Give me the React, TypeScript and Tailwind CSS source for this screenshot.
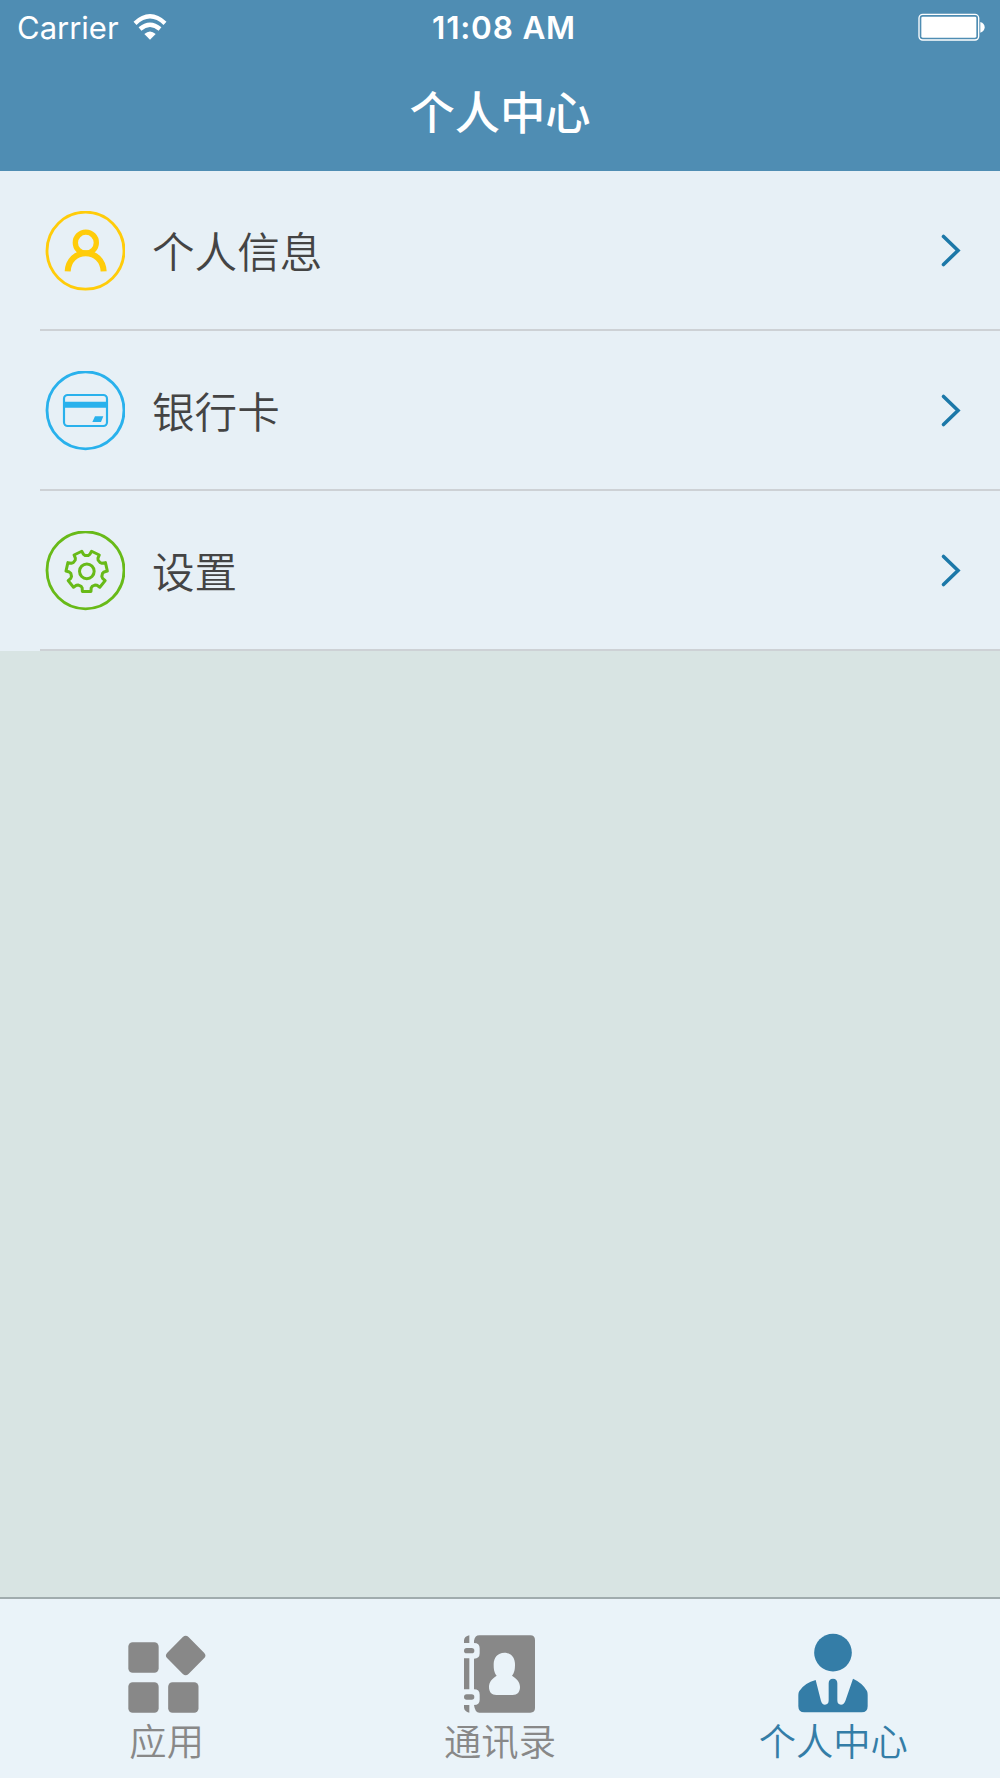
import type { ReactNode } from 'react';
import { clsx } from 'clsx';

interface MenuItem {
  label: string;
  icon: ReactNode;
}

interface TabItem extends MenuItem {
  active?: boolean;
}

// Closed outline of a cog with seven teeth, one of them pointing straight down
function cogPath(cx: number, cy: number) {
  const steps: [number, number][] = [[-12, 62], [12, 62], [15, 52], [20, 48], [31.4, 48], [36.4, 52]];
  const points: string[] = [];
  for (let tooth = 0; tooth < 7; tooth++) {
    for (const [offset, r] of steps) {
      const a = ((90 + (tooth * 360) / 7 + offset) * Math.PI) / 180;
      points.push(`${(cx + r * Math.cos(a)).toFixed(1)} ${(cy + r * Math.sin(a)).toFixed(1)}`);
    }
  }
  return `M${points.join('L')}Z`;
}

function WifiIcon() {
  return (
    <svg className="h-[26px] w-[34px]" viewBox="399 41 102 78" fill="none" stroke="white" strokeWidth="13">
      <path d="M405 69Q450 27 495 69" />
      <path d="M420 86Q450 61 480 86" />
      <path d="M433 101Q450 86 467 101L450 118Z" fill="white" stroke="none" />
    </svg>
  );
}

function BatteryIcon() {
  return (
    <svg className="h-7 w-[68px]" viewBox="117 39 204 84" fill="white">
      <rect x="120" y="43" width="179" height="77" rx="11" fill="none" stroke="white" strokeWidth="4" />
      <rect x="127" y="50" width="165" height="63" rx="4" />
      <path d="M304 66Q317 70 317 82Q317 94 304 98Z" />
    </svg>
  );
}

function ProfileIcon() {
  return (
    <svg className="size-20" viewBox="75 63 240 240" fill="none" stroke="#ffcc0a">
      <circle cx="196.5" cy="182" r="115.5" strokeWidth="8.5" />
      <circle cx="197.5" cy="158" r="31.5" strokeWidth="16" />
      <path d="M143 244C145 211 168 190 197 190S249 211 251 244" strokeWidth="18" />
    </svg>
  );
}

function BankCardIcon() {
  return (
    <svg className="size-20" viewBox="75 63 240 240" fill="none" stroke="#29b1ec">
      <circle cx="196.5" cy="181" r="115.5" strokeWidth="8.5" />
      <rect x="132" y="135" width="129" height="93" rx="11" strokeWidth="6.5" />
      <path d="M132 164.500H261" strokeWidth="18" />
      <path d="M225 199H250L243 216H217Z" fill="#29b1ec" stroke="none" />
    </svg>
  );
}

function SettingsIcon() {
  return (
    <svg className="size-20" viewBox="75 63 240 240" fill="none" stroke="#68ba18">
      <circle cx="196.5" cy="181" r="115.5" strokeWidth="8.5" />
      <path d={cogPath(200, 184)} strokeWidth="9" strokeLinejoin="round" />
      <circle cx="200.5" cy="184" r="22" strokeWidth="9" />
    </svg>
  );
}

function AppsIcon() {
  return (
    <svg className="size-20" viewBox="80 129 240 240" fill="currentColor">
      <rect x="84" y="157" width="91" height="91" rx="13" />
      <rect x="84" y="277" width="91" height="91" rx="13" />
      <rect x="203.500" y="277" width="91" height="91" rx="13" />
      <rect x="211" y="151.500" width="90" height="90" rx="12" transform="rotate(45 256 196.500)" />
    </svg>
  );
}

function ContactsIcon() {
  return (
    <svg className="size-20" viewBox="120 129 240 240" fill="currentColor">
      <path d="M148 136V159H132V151Q133 139 148 136ZM132 205H148V298H132ZM132 345H148V368Q133 364 132 353Z" />
      <rect x="132" y="174" width="31" height="16" rx="8" />
      <rect x="132" y="313" width="31" height="16" rx="8" />
      <path
        fillRule="evenodd"
        d="M178 136H331Q345 136 345 150V354Q345 368 331 368H178Q165 368 162 345Q179 345 179 329V314Q179 298 162 298V206Q179 206 179 190V175Q179 159 162 159V152Q165 136 178 136ZM253 188C233 188 221 203 221 222C221 237 222 247 230 257C215 266 207 277 207 291C207 306 215 315 229 315H278C292 315 300 306 300 291C300 277 291 266 276 257C284 247 285 237 285 222C285 203 273 188 253 188Z"
      />
    </svg>
  );
}

function PersonIcon() {
  return (
    <svg className="size-20" viewBox="160 129 240 240" fill="currentColor">
      <circle cx="280" cy="188" r="56.500" />
      <path d="M228 270L244 333Q247 344 256 344Q267 344 267 331V280Q267 266 280 266Q293 266 293 280V331Q293 344 304 344Q313 344 317 333L340 266Q369 279 382 303Q384 307 384 315V349Q384 367 366 367H194Q176 367 176 349V315Q176 307 179 303Q196 278 228 270Z" />
    </svg>
  );
}

function Chevron() {
  return (
    <svg className="h-9 w-6" viewBox="0 0 24 36" fill="none" stroke="#1c78a8" strokeWidth="3.6" strokeLinecap="round">
      <path d="M6.500 3.500L21 17.500L6.500 31.500" />
    </svg>
  );
}

const menuItems: MenuItem[] = [
  { label: '个人信息', icon: <ProfileIcon /> },
  { label: '银行卡', icon: <BankCardIcon /> },
  { label: '设置', icon: <SettingsIcon /> },
];

const tabs: TabItem[] = [
  { label: '应用', icon: <AppsIcon /> },
  { label: '通讯录', icon: <ContactsIcon /> },
  { label: '个人中心', icon: <PersonIcon />, active: true },
];

export default function App() {
  return (
    <div className="flex h-[1778px] w-[1000px] flex-col overflow-hidden bg-[#d8e4e3] font-['Inter','Noto_Sans_CJK_SC',sans-serif]">
      <header className="flex h-[172px] flex-col border-b border-[#8aa5b5] bg-[#4f8db3] text-white">
        {/* Status bar */}
        <div className="grid h-[54px] grid-cols-3 items-center pr-[14px] pl-[17px]">
          <div className="flex items-center gap-[14px]">
            <span className="text-[31px] leading-none">Carrier</span>
            <WifiIcon />
          </div>
          <span className="pt-px pl-[5px] text-center text-[31.5px] leading-none font-semibold tracking-[0.8px] whitespace-nowrap">
            11:08 AM
          </span>
          <div className="flex justify-end">
            <BatteryIcon />
          </div>
        </div>
        <h1 className="flex flex-1 items-center justify-center pt-0.5 text-[45.3px] leading-none font-[450]">个人中心</h1>
      </header>

      <main className="flex-1">
        {menuItems.map(item => (
          <div key={item.label} className="bg-[#e7f0f6] pl-10 first:-mt-px">
            <div className="flex h-40 items-center border-b-2 border-[#cdd1d5] pt-0.5 pr-[39px] pl-[5px]">
              {item.icon}
              <span className="ml-[27px] flex-1 pt-[5px] text-[42.6px] leading-none font-[350] text-[#444]">{item.label}</span>
              <Chevron />
            </div>
          </div>
        ))}
      </main>

      <nav className="grid h-[181px] grid-cols-3 border-t-2 border-[#a0acae] bg-[#eaf3f9]">
        {tabs.map(tab => (
          <button
            key={tab.label}
            className={clsx('flex flex-col items-center pt-[34px]', tab.active ? 'text-[#347da7]' : 'text-[#888]')}
          >
            {tab.icon}
            <span className="mt-[11px] text-[37.3px] leading-none font-[350]">{tab.label}</span>
          </button>
        ))}
      </nav>
    </div>
  );
}
